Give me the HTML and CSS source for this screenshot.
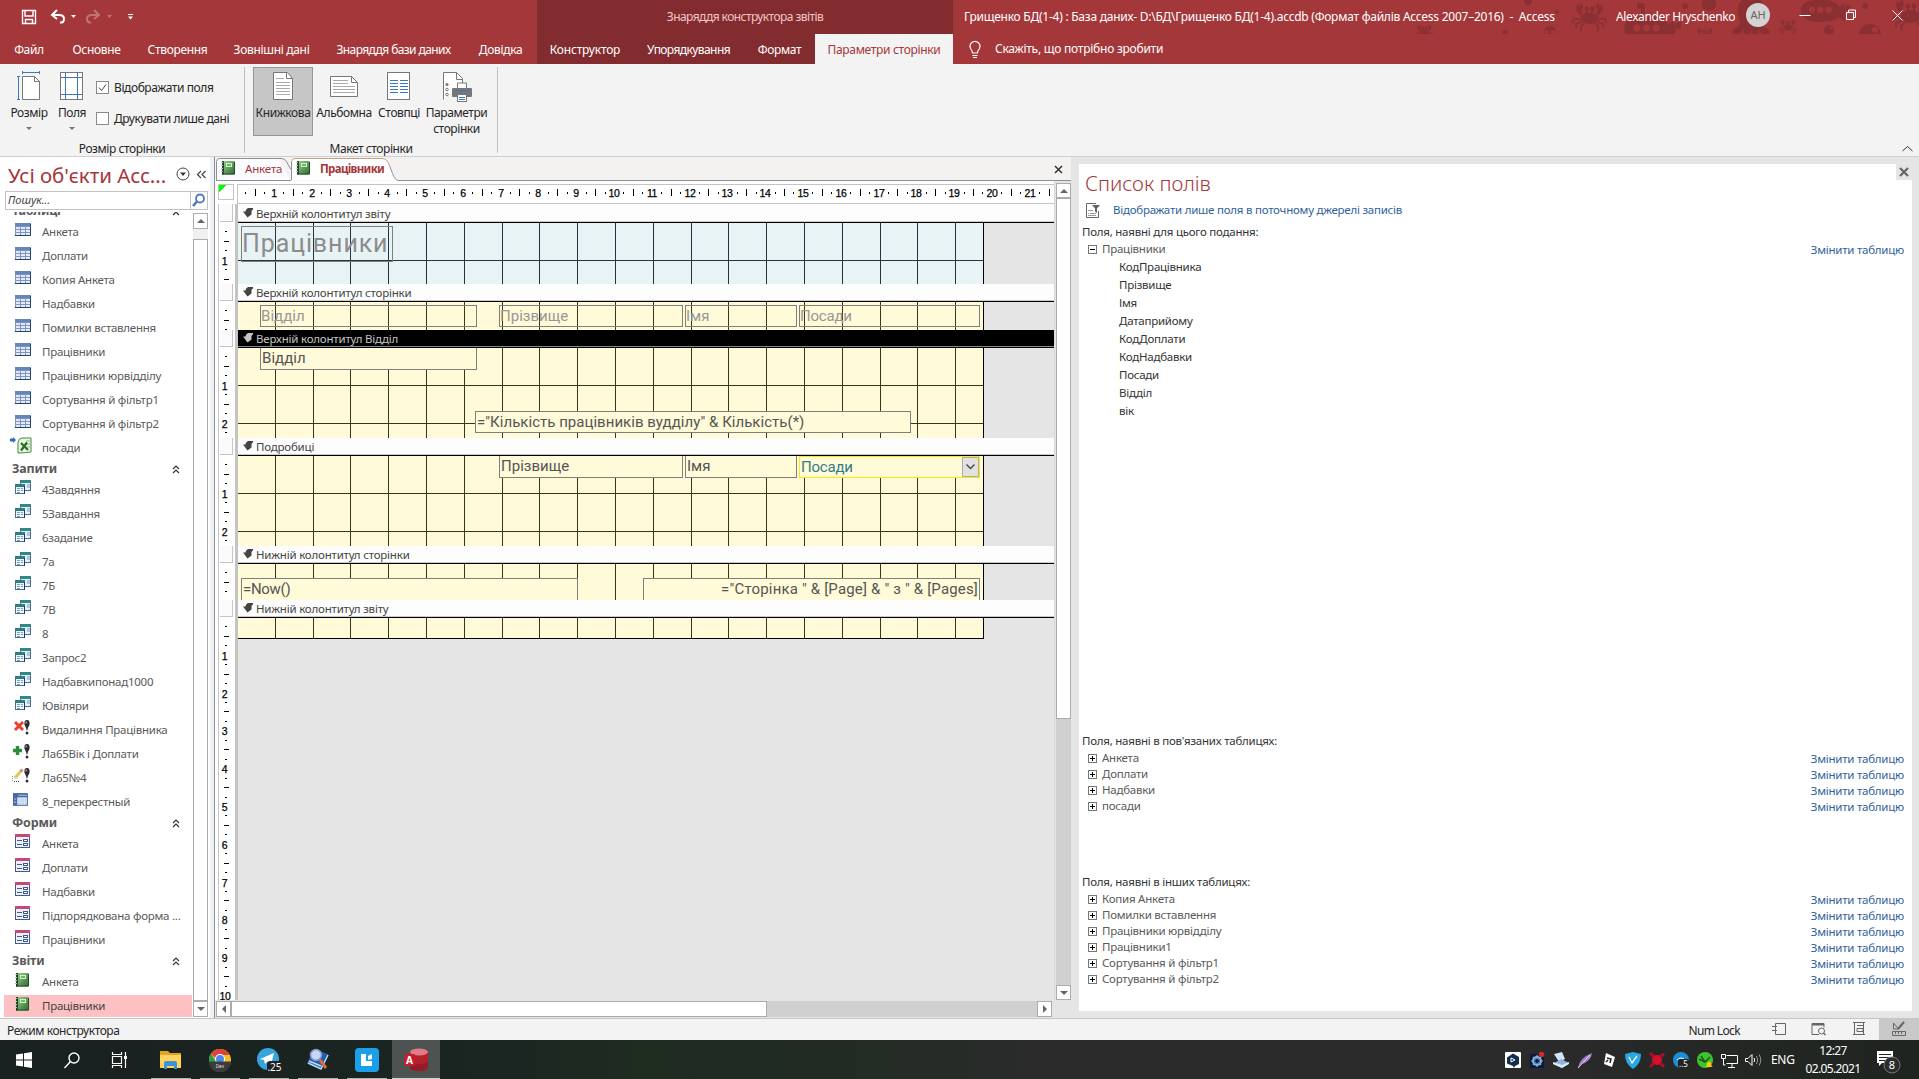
FILE: index.html
```html
<!DOCTYPE html>
<html lang="uk">
<head>
<meta charset="utf-8">
<title>Грищенко БД(1-4) - Access</title>
<link rel="stylesheet" href="styles.css">
</head>
<body>
<svg class="defs" width="0" height="0">
  <defs>
    <linearGradient id="gGreen" x1="0" y1="0" x2="1" y2="1"><stop offset="0" stop-color="#9bd48c"/><stop offset="1" stop-color="#2c6b31"/></linearGradient>
  </defs>
  <symbol id="i-table" viewBox="0 0 17 14"><rect width="16" height="13" fill="#7d95c2"/><rect width="16" height="3" fill="#6685bd"/><path d="M1 4h4v2H1zM6 4h4v2H6zM11 4h4v2h-4zM1 7h4v2H1zM6 7h4v2H6zM11 7h4v2h-4zM1 10h4v2H1zM6 10h4v2H6zM11 10h4v2h-4z" fill="#e3ebf8"/><path d="M0 12.500h15.500V1" stroke="#2c426e" fill="none"/></symbol>
  <symbol id="i-query" viewBox="0 0 17 15"><rect x="5.500" y=".5" width="10" height="10" fill="#e6effa" stroke="#48718f"/><rect x="5" width="11" height="3" fill="#2c8a87"/><path d="M12 5h3M12 7h3" stroke="#7f9ec4"/><rect x=".5" y="4.500" width="9" height="9" fill="#eef4fc" stroke="#48718f"/><rect y="4" width="10" height="3" fill="#2f7d83"/><path d="M2 8.500h3M6 8.500h2M2 10.500h3M6 10.500h2M2 12.500h3" stroke="#7f9ec4"/><path d="M9.500 6v8" stroke="#213a5e"/></symbol>
  <symbol id="i-form" viewBox="0 0 16 15"><rect x=".5" y=".5" width="14" height="13" fill="#edf1fa" stroke="#43598a"/><rect width="15" height="3" fill="#c74779"/><path d="M2 6.500h5M2 10.500h5" stroke="#43598a"/><rect x="8.500" y="5.500" width="4" height="2" fill="#fff" stroke="#43598a"/><rect x="8.500" y="9.500" width="4" height="2" fill="#fff" stroke="#43598a"/></symbol>
  <symbol id="i-report" viewBox="0 0 14 14"><rect x="1" width="12.500" height="13.500" fill="url(#gGreen)"/><rect x="1" width="2" height="13.500" fill="#26422a"/><path d="M0 1.500h2M0 4.500h2M0 7.500h2M0 10.500h2" stroke="#bcc7bc"/><rect x="5.500" y="2.500" width="5" height="3" fill="#72b56d" stroke="#d5efcf"/><path d="M1 13h12.500V1" stroke="#1e4c28" fill="none"/></symbol>
  <symbol id="i-excel" viewBox="0 0 22 17"><path d="M0 1.500h3V0l3 3-3 3V4.500H0z" fill="#3568c4"/><path d="M8 5q1-4 4-4h9v14q-7 1-13 1z" fill="#eaf6e6" stroke="#418a3a"/><path d="M16 4h4M17 7h3M17 10h3" stroke="#8cc183"/><path d="M11 6l7 7M17 5.500l-6 8" stroke="#276e27" stroke-width="2.200"/></symbol>
  <symbol id="i-bang" viewBox="0 0 8 16"><ellipse cx="4" cy="3.500" rx="2.600" ry="3.400" fill="#2c2c2c"/><path d="M2 5l2 6 2-6z" fill="#2c2c2c"/><circle cx="3.200" cy="2.400" r="1" fill="#999"/><circle cx="4" cy="13" r="1.500" fill="#333"/></symbol>
  <symbol id="i-del" viewBox="0 0 20 16"><path d="M3 2l8 8M11 2l-8 8" stroke="#e8402f" stroke-width="3"/><use href="#i-bang" x="11" width="8" height="16"/></symbol>
  <symbol id="i-add" viewBox="0 0 20 16"><path d="M5.500 2v9M1 6.500h9" stroke="#2e8a3c" stroke-width="3.400"/><use href="#i-bang" x="11" width="8" height="16"/></symbol>
  <symbol id="i-upd" viewBox="0 0 20 16"><path d="M3 10l6-7" stroke="#e4c65c" stroke-width="3"/><path d="M8.500 3.500l2-2" stroke="#d08a86" stroke-width="3"/><path d="M0 8v5M2 13.500h5" stroke="#333" stroke-dasharray="1 1"/><use href="#i-bang" x="11" width="8" height="16"/></symbol>
  <symbol id="i-cross" viewBox="0 0 16 13"><rect width="14" height="12" fill="#4467a8"/><rect x="4" y="4" width="9" height="7" fill="#eaf0fa"/><path d="M5 5.500h8M5 7.500h8M5 9.500h8" stroke="#7f9cc8" stroke-dasharray="1 1"/><path d="M1 5.500h2M1 8.500h2M5 2h8" stroke="#a9c0e6"/></symbol>
  <symbol id="i-up2" viewBox="0 0 8 9"><path d="M1 4l3-3 3 3M1 8l3-3 3 3" stroke="#333" stroke-width="1.200" fill="none"/></symbol>
  <symbol id="i-plus" viewBox="0 0 9 9"><rect x=".5" y=".5" width="8" height="8" fill="#fff" stroke="#777"/><path d="M2 4.500h5M4.500 2v5" stroke="#000"/></symbol>
  <symbol id="i-minus" viewBox="0 0 9 9"><rect x=".5" y=".5" width="8" height="8" fill="#fff" stroke="#777"/><path d="M2 4.500h5" stroke="#000"/></symbol>
  <symbol id="i-sec" viewBox="0 0 10 10"><path d="M10 0H5Q2.500 1 2.500 3.500H0L4.500 9.500 8.500 6.500V3.500Q8.500 2 10 1.500z" fill="currentColor"/></symbol>
  <symbol id="cols" viewBox="0 0 746 100"><path d="M37.500 0v100M75.500 0v100M112.500 0v100M150.500 0v100M188.500 0v100M226.500 0v100M264.500 0v100M301.500 0v100M339.500 0v100M377.500 0v100M415.500 0v100M453.500 0v100M490.500 0v100M528.500 0v100M566.500 0v100M604.500 0v100M642.500 0v100M679.500 0v100M717.500 0v100" stroke="currentColor"/><path d="M745.500 0v100" stroke="#000"/></symbol>
  <symbol id="crab" viewBox="0 0 40 40"><path d="M10 20q10-8 20 0-2 9-10 9t-10-9zM12 20Q3 16 6 6l3 4 1-5q5 5 1 9zM28 20q9-4 6-14l-3 4-1-5q-5 5-1 9z"/><path d="M11 24l-8-1-2 5M12 26l-7 3v5M14 28l-4 4 1 5M29 24l8-1 2 5M28 26l7 3v5M26 28l4 4-1 5M17 18v-5M23 18v-5" fill="none" stroke="#8a3033" stroke-width="2"/><circle cx="17" cy="12" r="2.500"/><circle cx="23" cy="12" r="2.500"/></symbol>
  <symbol id="octo" viewBox="0 0 40 48"><path d="M20 2c14 0 15 14 10 24 1 6 8 4 8 10s-5 6-5 2c-3-2-5-4-6-6 0 5 1 14-3 14s-1-8-4-12c-3 4 0 12-4 12s-3-9-3-14c-1 2-3 4-6 6 0 4-5 4-5-2s7-4 8-10C5 16 6 2 20 2z"/></symbol>
  <symbol id="sub" viewBox="0 0 56 40"><path d="M18 14V6h-4V1h7v12zM2 25Q2 13 24 13q14 0 20 8l4-4 2 8-1 12-6-5q-6 5-19 5Q2 37 2 25zM50 19h5v6h-5z"/><g fill="#a4373a"><circle cx="14" cy="24" r="3.400"/><circle cx="23" cy="24" r="3.400"/><circle cx="32" cy="24" r="3.400"/></g></symbol>
</svg>

<header class="titlebar">
  <svg class="pattern" width="519" height="50" viewBox="1400 0 519 50" fill="#8a3033">
    <use href="#crab" x="1412" y="22" width="25" height="19"/><use href="#crab" x="1568" y="-2" width="43" height="36"/><use href="#crab" x="1692" y="25" width="26" height="20"/><use href="#crab" x="1776" y="17" width="24" height="19"/><use href="#crab" x="1887" y="-6" width="48" height="40"/>
    <use href="#octo" x="1540" y="25" width="20" height="21"/><use href="#octo" x="1730" y="-5" width="42" height="51"/>
    <use href="#sub" x="1622" y="2" width="60" height="43"/><use href="#sub" x="1799" y="-14" width="52" height="40"/>
    <circle cx="1505" cy="33" r="3"/><circle cx="1528" cy="1" r="4"/><circle cx="1685" cy="6" r="3"/><circle cx="1709" cy="4" r="7"/><circle cx="1829" cy="30" r="5"/><circle cx="1870" cy="35" r="11"/><circle cx="1865" cy="6" r="3"/><circle cx="1557" cy="12" r="2"/>
    <circle cx="1875" cy="30" r="3" fill="#a4373a"/><circle cx="1831" cy="28" r="1.500" fill="#a4373a"/><circle cx="1547" cy="32" r="2" fill="#a4373a"/><circle cx="1553" cy="32" r="2" fill="#a4373a"/>
  </svg>
  <div class="qat">
    <svg width="150" height="34" fill="none" stroke="#fff"><path d="M22.500 10.500h13v13h-13zM25 10.500v5.500h8v-5.500M25.500 23.500v-4h7v4" stroke-width="1.400"/><path d="M57 10l-5 5 5 4M52.500 15h6.500q5 0 5 4t-4 3.500" stroke-width="2"/><path d="M71 15h5l-2.500 3z" fill="#fff" stroke="none"/><g opacity=".3"><path d="M94 10l5 5-5 4M99 15h-7q-5 0-5 4t4 3.500" stroke-width="2"/><path d="M107 15h5l-2.500 3z" fill="#fff" stroke="none"/></g><path d="M128 14.500h5"/><path d="M128 16.500h5l-2.500 3z" fill="#fff" stroke="none"/></svg>
  </div>
  <div class="context-title">Знаряддя конструктора звітів</div>
  <div class="doc-title">Грищенко БД(1-4) : База даних- D:\БД\Грищенко БД(1-4).accdb (Формат файлів Access 2007–2016) &nbsp;-&nbsp; Access</div>
  <div class="user">Alexander Hryschenko</div>
  <div class="avatar">AH</div>
  <svg class="winbtns" width="139" height="34" fill="none" stroke="#fff"><path d="M19.500 15.500h11M66.500 12.500h7v7h-7zM68.500 12v-2h7v7.500h-2M112.500 10.500l10 10M122.500 10.500l-10 10"/></svg>
</header>
<nav class="tabs">
  <span>Файл</span><span>Основне</span><span>Створення</span><span>Зовнішні дані</span><span class="tight">Знаряддя бази даних</span><span>Довідка</span><span class="ctx loose">Конструктор</span><span class="ctx tight">Упорядкування</span><span class="ctx">Формат</span><span class="active">Параметри сторінки</span>
  <span class="tell"><svg width="14" height="20" fill="none" stroke="#fff" stroke-width="1.200"><path d="M4.500 13q0-2-2-4.500a5 5 0 1 1 9 0q-2 2.500-2 4.500zM4.500 15.500h5M5 17.500h4"/></svg>Скажіть, що потрібно зробити</span>
</nav>

<section class="ribbon">
  <div class="group size-group">
    <div class="group-body">
      <div class="big w-size"><svg width="26" height="32" fill="none"><path d="M6.500 5.500h12l5 5v18h-17z" fill="#fff" stroke="#777"/><path d="M18.500 5.500v5h5" stroke="#777"/><path d="M6 1.500h18M6.500 0v3M23.500 0v3M2.500 6v23M1 5.500h3M1 28.500h3" stroke="#3b78bd"/></svg><span>Розмір</span><i class="caret"></i></div>
      <div class="big w-fields"><svg width="26" height="32" fill="none"><rect x="1.500" y="1.500" width="22" height="27" fill="#fff" stroke="#777"/><path d="M6.500 2v26M18.500 2v26M2 6.500h21M2 23.500h21" stroke="#3b78bd"/></svg><span>Поля</span><i class="caret"></i></div>
      <div class="checks">
        <label><svg width="13" height="13" fill="none"><rect x=".5" y=".5" width="12" height="12" fill="#fff" stroke="#8a8a8a"/><path d="M3 6.500l2.500 3 4.500-6" stroke="#444"/></svg>Відображати поля</label>
        <label><svg width="13" height="13" fill="none"><rect x=".5" y=".5" width="12" height="12" fill="#fff" stroke="#8a8a8a"/></svg>Друкувати лише дані</label>
      </div>
    </div>
    <div class="group-name">Розмір сторінки</div>
  </div>
  <div class="group layout-group">
    <div class="group-body">
      <div class="big w-port pressed"><svg width="26" height="32" fill="none"><path d="M3.500 1.500h14l5 6v21h-19z" fill="#fff" stroke="#777"/><path d="M16.500 1.500v6h6" stroke="#777"/><path d="M6 7.500h8M6 11.500h14M6 14.500h14M6 17.500h14M6 20.500h14M6 23.500h14" stroke="#aaa"/></svg><span>Книжкова</span></div>
      <div class="big w-land"><svg width="30" height="32" fill="none"><path d="M1.500 5.500h21l6 6v14h-27z" fill="#fff" stroke="#777"/><path d="M22.500 5.500v6h6" stroke="#777"/><path d="M4 9.500h15M4 12.500h15M4 15.500h22M4 18.500h22M4 21.500h22" stroke="#aaa"/></svg><span>Альбомна</span></div>
      <div class="big w-cols"><svg width="26" height="32" fill="none"><rect x="1.500" y="1.500" width="22" height="27" fill="#fff" stroke="#777"/><path d="M4 9.500h8M14 9.500h8M4 12.500h8M14 12.500h8M4 15.500h8M14 15.500h8M4 18.500h8M14 18.500h8M4 21.500h8M14 21.500h8" stroke="#3b78bd"/></svg><span>Стовпці</span></div>
      <div class="big w-setup"><svg width="32" height="32" fill="none"><path d="M2.500 28.500v-27h13l6 6v5" fill="#fff" stroke="#777"/><path d="M15.500 1.500v7h6" stroke="#777"/><circle cx="6" cy="13.500" r="1.500" fill="#777"/><circle cx="6" cy="18.500" r="1.300" stroke="#777"/><circle cx="6" cy="23.500" r="1.300" stroke="#777"/><rect x="11" y="17" width="20" height="9" rx="1" fill="#777"/><path d="M16.500 17v-5h9v5" fill="#fff" stroke="#777"/><path d="M14 19.500h14V17" stroke="#3b78bd"/><rect x="16.500" y="23.500" width="9" height="7" fill="#fff" stroke="#777"/><path d="M18 26.500h6M18 28.500h6" stroke="#3b78bd"/></svg><span>Параметри<br>сторінки</span></div>
    </div>
    <div class="group-name">Макет сторінки</div>
  </div>
  <svg class="collapse" width="12" height="8" fill="none" stroke="#333"><path d="M1.500 6l5-4.500 5 4.500"/></svg>
</section>

<main class="work">
  <aside class="nav">
    <div class="nav-title"><span>Усі об'єкти Acc...</span><svg width="34" height="16" fill="none" stroke="#444"><circle cx="8" cy="7" r="6"/><path d="M5 5.500h6l-3 3.500z" fill="#333" stroke="none"/><path d="M26 4l-3.500 3.500L26 11M30.500 4L27 7.500l3.500 3.500" stroke-width="1.200"/></svg></div>
    <div class="search"><span>Пошук...</span><svg width="17" height="17" fill="none"><circle cx="9" cy="6.500" r="4" stroke="#4a7ab8" stroke-width="1.800"/><path d="M6 9.500L2 14" stroke="#4a7ab8" stroke-width="2.600"/></svg></div>
    <div class="nav-body">
      <div class="tree">
        <h3 class="first">Таблиці<svg width="8" height="9"><use href="#i-up2"/></svg></h3>
        <p><svg width="17" height="14"><use href="#i-table"/></svg>Анкета</p>
        <p><svg width="17" height="14"><use href="#i-table"/></svg>Доплати</p>
        <p><svg width="17" height="14"><use href="#i-table"/></svg>Копия Анкета</p>
        <p><svg width="17" height="14"><use href="#i-table"/></svg>Надбавки</p>
        <p><svg width="17" height="14"><use href="#i-table"/></svg>Помилки вставлення</p>
        <p><svg width="17" height="14"><use href="#i-table"/></svg>Працівники</p>
        <p><svg width="17" height="14"><use href="#i-table"/></svg>Працівники юрвідділу</p>
        <p><svg width="17" height="14"><use href="#i-table"/></svg>Сортування й фільтр1</p>
        <p><svg width="17" height="14"><use href="#i-table"/></svg>Сортування й фільтр2</p>
        <p class="wide"><svg width="22" height="17"><use href="#i-excel"/></svg>посади</p>
        <h3>Запити<svg width="8" height="9"><use href="#i-up2"/></svg></h3>
        <p><svg width="17" height="15"><use href="#i-query"/></svg>4Завдяння</p>
        <p><svg width="17" height="15"><use href="#i-query"/></svg>5Завдання</p>
        <p><svg width="17" height="15"><use href="#i-query"/></svg>6задание</p>
        <p><svg width="17" height="15"><use href="#i-query"/></svg>7а</p>
        <p><svg width="17" height="15"><use href="#i-query"/></svg>7Б</p>
        <p><svg width="17" height="15"><use href="#i-query"/></svg>7В</p>
        <p><svg width="17" height="15"><use href="#i-query"/></svg>8</p>
        <p><svg width="17" height="15"><use href="#i-query"/></svg>Запрос2</p>
        <p><svg width="17" height="15"><use href="#i-query"/></svg>Надбавкипонад1000</p>
        <p><svg width="17" height="15"><use href="#i-query"/></svg>Ювіляри</p>
        <p class="act"><svg width="20" height="16"><use href="#i-del"/></svg>Видалиння Працівника</p>
        <p class="act"><svg width="20" height="16"><use href="#i-add"/></svg>Ла65Вік і Доплати</p>
        <p class="act"><svg width="20" height="16"><use href="#i-upd"/></svg>Ла65№4</p>
        <p class="act"><svg width="20" height="14" viewBox="0 0 20 14"><use href="#i-cross" x="1" width="17" height="14"/></svg>8_перекрестный</p>
        <h3>Форми<svg width="8" height="9"><use href="#i-up2"/></svg></h3>
        <p><svg width="16" height="15"><use href="#i-form"/></svg>Анкета</p>
        <p><svg width="16" height="15"><use href="#i-form"/></svg>Доплати</p>
        <p><svg width="16" height="15"><use href="#i-form"/></svg>Надбавки</p>
        <p><svg width="16" height="15"><use href="#i-form"/></svg>Підпорядкована форма ...</p>
        <p><svg width="16" height="15"><use href="#i-form"/></svg>Працівники</p>
        <h3>Звіти<svg width="8" height="9"><use href="#i-up2"/></svg></h3>
        <p><svg width="14" height="14"><use href="#i-report"/></svg>Анкета</p>
        <p class="selected"><svg width="14" height="14"><use href="#i-report"/></svg>Працівники</p>
      </div>
      <div class="vscroll nav-scroll"><b class="btn"><i class="up"></i></b><b class="gap"></b><b class="thumb"></b><b class="btn"><i class="down"></i></b></div>
    </div>
  </aside>
  <div class="splitter"></div>

  <section class="doc">
    <div class="doc-tabs">
      <svg class="tab-shapes" width="856" height="24" fill="none"><path d="M0 23.500h1.500V4q0-3 3-3H59q5 0 8 6l9 17z" fill="#fafcff" stroke="none"/><path d="M1.500 23V4.500q0-3 3-3H66q5 0 7 6l3 5" stroke="#8b9097"/><path d="M76 23.500V5q0-3.500 3.500-3.500H167q5 0 7.500 7l3 8q2.500 7 6 7z" fill="#fff"/><path d="M76.500 23V5q0-3.500 3.500-3.500H167q5 0 7.500 7" stroke="#c2a083"/><path d="M1 23.500h75M76.500 23V5M174.500 8.500l3 8q2.500 7 6 7H856" stroke="#8b9097"/></svg>
      <div class="tab t1"><svg width="14" height="14"><use href="#i-report"/></svg>Анкета</div>
      <div class="tab t2"><svg width="14" height="14"><use href="#i-report"/></svg>Працівники</div>
      <svg class="doc-close" width="9" height="9" stroke="#333" stroke-width="1.500"><path d="M1 1l7 7M8 1L1 8"/></svg>
    </div>
    <div class="doc-main">
      <div class="designer">
        <div class="top-ruler"><div class="corner"></div><div class="hr"><svg class="ruler-h" width="815" height="18"></svg></div></div>
        <div class="sections">
          <div class="sec r0"><div class="vr"><b></b><svg class="ruler-v" data-ticks="6" height="61"></svg></div><div class="main"><div class="bar"><svg width="10" height="10"><use href="#i-sec"/></svg>Верхній колонтитул звіту</div><div class="canvas blue"><svg width="746" height="61" viewBox="0 0 746 61"><use href="#cols" width="746" height="100"/><path d="M0 37.500h745" stroke="currentColor"/></svg><div class="ctl title">Працівники</div></div></div></div>
          <div class="sec r1"><div class="vr"><b></b><svg class="ruler-v" data-ticks="3" height="29"></svg></div><div class="main"><div class="bar"><svg width="10" height="10"><use href="#i-sec"/></svg>Верхній колонтитул сторінки</div><div class="canvas"><svg width="746" height="28"><use href="#cols" width="746" height="100"/></svg><div class="ctl lbl c-dept">Відділ</div><div class="ctl lbl c-sur">Прізвище</div><div class="ctl lbl c-name">Імя</div><div class="ctl lbl c-pos">Посади</div></div></div></div>
          <div class="sec r2"><div class="vr"><b></b><svg class="ruler-v" data-ticks="9" height="91"></svg></div><div class="main"><div class="bar dark"><svg width="10" height="10"><use href="#i-sec"/></svg>Верхній колонтитул Відділ</div><div class="canvas"><svg width="746" height="90"><use href="#cols" width="746" height="100"/><path d="M0 37.500h745M0 75.500h745" stroke="currentColor"/></svg><div class="ctl c-dept2">Відділ</div><div class="ctl c-count">="Кількість працівників вудділу" &amp; Кількість(*)</div></div></div></div>
          <div class="sec r3"><div class="vr"><b></b><svg class="ruler-v" data-ticks="9" height="91"></svg></div><div class="main"><div class="bar"><svg width="10" height="10"><use href="#i-sec"/></svg>Подробиці</div><div class="canvas"><svg width="746" height="90"><use href="#cols" width="746" height="100"/><path d="M0 37.500h745M0 75.500h745" stroke="currentColor"/></svg><div class="ctl d c-sur">Прізвище</div><div class="ctl d c-name">Імя</div><div class="ctl d c-pos picked">Посади<span class="drop"><svg width="9" height="6" fill="none" stroke="#444" stroke-width="1.300"><path d="M.5.5l4 4 4-4"/></svg></span></div></div></div></div>
          <div class="sec r4"><div class="vr"><b></b><svg class="ruler-v" data-ticks="3" height="37"></svg></div><div class="main"><div class="bar"><svg width="10" height="10"><use href="#i-sec"/></svg>Нижній колонтитул сторінки</div><div class="canvas"><svg width="746" height="36"><use href="#cols" width="746" height="100"/></svg><div class="ctl c-now">=Now()</div><div class="ctl c-page">="Сторінка " &amp; [Page] &amp; " з " &amp; [Pages]</div></div></div></div>
          <div class="sec r5"><div class="vr"><b></b><svg class="ruler-v" data-ticks="40" height="383"></svg></div><div class="main"><div class="bar"><svg width="10" height="10"><use href="#i-sec"/></svg>Нижній колонтитул звіту</div><div class="canvas"><svg width="746" height="20"><use href="#cols" width="746" height="100"/></svg></div></div></div>
        </div>
      </div>
      <div class="vscroll doc-scroll"><b class="btn"><i class="up"></i></b><b class="thumb"></b><b class="track"></b><b class="btn"><i class="down"></i></b></div>
    </div>
    <div class="hscroll"><b class="btn"><i class="left"></i></b><b class="thumb"></b><b class="track"></b><b class="btn"><i class="right"></i></b></div>
  </section>

  <aside class="fields">
    <div class="fields-in">
      <svg class="panel-close" width="16" height="16"><rect width="16" height="16" fill="#e5e5e5"/><path d="M4 4l8 8M12 4l-8 8" stroke="#666" stroke-width="2.200"/></svg>
      <h2>Список полів</h2>
      <div class="only"><svg width="16" height="17" fill="none"><path d="M13.500 9v6.500h-12v-14H11" stroke="#666"/><path d="M7 3h8l-3 3.500V11l-2-1.500v-3z" fill="#666"/><path d="M3 8.500h5M3 11.500h1M5 11.500h6M3 13.500h8" stroke="#999"/></svg><a>Відображати лише поля в поточному джерелі записів</a></div>
      <div class="cap">Поля, наявні для цього подання:</div>
      <div class="row r-first"><svg width="9" height="9"><use href="#i-minus"/></svg><span>Працівники</span><a>Змінити таблицю</a></div>
      <ul class="flist"><li>КодПрацівника</li><li>Прізвище</li><li>Імя</li><li>Датаприйому</li><li>КодДоплати</li><li>КодНадбавки</li><li>Посади</li><li>Відділ</li><li>вік</li></ul>
      <div class="cap cap2">Поля, наявні в пов'язаних таблицях:</div>
      <div class="row"><svg width="9" height="9"><use href="#i-plus"/></svg><span>Анкета</span><a>Змінити таблицю</a></div>
      <div class="row"><svg width="9" height="9"><use href="#i-plus"/></svg><span>Доплати</span><a>Змінити таблицю</a></div>
      <div class="row"><svg width="9" height="9"><use href="#i-plus"/></svg><span>Надбавки</span><a>Змінити таблицю</a></div>
      <div class="row"><svg width="9" height="9"><use href="#i-plus"/></svg><span>посади</span><a>Змінити таблицю</a></div>
      <div class="cap cap3">Поля, наявні в інших таблицях:</div>
      <div class="row"><svg width="9" height="9"><use href="#i-plus"/></svg><span>Копия Анкета</span><a>Змінити таблицю</a></div>
      <div class="row"><svg width="9" height="9"><use href="#i-plus"/></svg><span>Помилки вставлення</span><a>Змінити таблицю</a></div>
      <div class="row"><svg width="9" height="9"><use href="#i-plus"/></svg><span>Працівники юрвідділу</span><a>Змінити таблицю</a></div>
      <div class="row"><svg width="9" height="9"><use href="#i-plus"/></svg><span>Працівники1</span><a>Змінити таблицю</a></div>
      <div class="row"><svg width="9" height="9"><use href="#i-plus"/></svg><span>Сортування й фільтр1</span><a>Змінити таблицю</a></div>
      <div class="row"><svg width="9" height="9"><use href="#i-plus"/></svg><span>Сортування й фільтр2</span><a>Змінити таблицю</a></div>
    </div>
  </aside>
</main>

<footer class="status">
  <span class="mode">Режим конструктора</span><span class="num">Num Lock</span>
  <svg width="40" height="22" fill="none" stroke="#666"><path d="M16.500 4.500h10v11h-10zM13 7.500h5M13 11.500h5" /></svg>
  <svg width="40" height="22" fill="none" stroke="#666"><path d="M20 15.500h-7v-11h12v4"/><path d="M13 5.500h12" stroke-width="2"/><circle cx="22.500" cy="12" r="3"/><path d="M24.500 14l2 2" stroke-width="1.400"/></svg>
  <svg width="40" height="22" fill="none" stroke="#666"><path d="M14 3.500h12M14 15.500h12M15.500 3v13M24.500 3v13M18 6.500h6M18 9.500h6v3h-6z"/></svg>
  <svg class="on" width="40" height="22" fill="none" stroke="#666"><path d="M14.500 4v6h5zM13.500 12.500h13v4h-13zM16.500 13v2M19.500 13v2M22.500 13v2"/><path d="M19 10l6-7" stroke-width="2"/></svg>
</footer>

<footer class="taskbar">
  <div class="tcell"><svg width="18" height="18" viewBox="0 0 18 18" fill="#fff"><path d="M1 3.500l7-1V8.500H1zM9 2.300L17 1v7.500H9zM1 9.500h7V15.500l-7-1zM9 9.500h8V17l-8-1.200z"/></svg></div>
  <div class="tcell"><svg width="18" height="18" fill="none" stroke="#fff" stroke-width="1.400"><circle cx="11" cy="7" r="5"/><path d="M7.500 10.500L1.500 17"/></svg></div>
  <div class="tcell"><svg width="18" height="18" fill="none" stroke="#fff" stroke-width="1.200"><path d="M1.500 1v2.500h9V1M1.500 5.500h9v7h-9zM1.500 17v-2.500h9V17M14.500 1v16"/><path d="M13 5h3v3h-3z" fill="#fff" stroke="none"/></svg></div>
  <div class="tcell app"><svg width="24" height="20"><path d="M1 1h8l2 2h11v5H1z" fill="#e0a51c"/><rect x="1" y="5" width="21" height="13" fill="#ffd35c"/><path d="M5 19v-6q0-2 2-2h9q2 0 2 2v6h-3v-3H8v3z" fill="#3b93d9"/></svg></div>
  <div class="tcell app"><svg width="24" height="24"><circle cx="12" cy="12" r="11" fill="#f3c02b"/><path d="M12 1a11 11 0 0 1 10 6H12a5 5 0 0 0-4.500 3L3 5.500A11 11 0 0 1 12 1z" fill="#dc4437"/><path d="M3 5.500l5 8 2 3.500-2 5A11 11 0 0 1 3 5.500z" fill="#2d9b51"/><circle cx="12" cy="11" r="5" fill="#fff"/><circle cx="12" cy="11" r="4" fill="#4a8af4"/><path d="M1 13.500h22a11 11 0 0 1-22 0z" fill="#3c3c3c"/><text x="12" y="19.500" class="dev">Dev</text></svg></div>
  <div class="tcell app"><svg width="26" height="26"><circle cx="12" cy="12" r="11" fill="#35a5dc"/><path d="M4 12l14-6-3 12-4-3-2 2-1-4z" fill="#fff"/><rect x="11" y="14" width="15" height="11" rx="3" fill="#222"/><text x="18.500" y="23.500" class="badge-t">.25</text></svg></div>
  <div class="tcell app"><svg width="24" height="26"><path d="M8 2l14 5-7 15L1 16z" fill="#1e5faa"/><path d="M2 16l13 6 7-14M3 14l12 5" stroke="#b9dcf6" stroke-width="1.500" fill="none"/><circle cx="10" cy="8" r="5.500" fill="#c6d8f5" stroke="#8594c0" stroke-width="1.500"/><path d="M14 13l6 8" stroke="#dc6a40" stroke-width="3"/></svg></div>
  <div class="tcell app"><svg width="24" height="24"><rect width="24" height="24" rx="4" fill="#1aa0e8"/><path d="M6 6h5v7h6v5H6z" fill="#fff"/><path d="M13 8l4-2v5l-4 1z" fill="#fff"/></svg></div>
  <div class="tcell app active-app"><svg width="26" height="24"><path d="M7 4v15q0 4 9 4t9-4V4z" fill="#b3212f"/><path d="M7 12q0 4 9 4t9-4v7q0 4-9 4t-9-4z" fill="#921c2a"/><ellipse cx="16" cy="4" rx="9" ry="3.500" fill="#e37a86"/><rect x="1" y="6" width="11" height="12" rx="1" fill="#c3202f"/><text x="6.500" y="15.500" class="acc">A</text></svg></div>
  <div class="tray">
    <svg width="24" height="20"><rect x="4" y="2" width="16" height="16" rx="1" fill="#fff"/><path d="M12 3.500l6 3.500v7l-4 2-1 2-1-2-6-2.500v-6z" fill="#142d4c"/><path d="M10 8l4 2-4 2z" fill="none" stroke="#fff"/></svg>
    <svg width="24" height="20"><rect x="5" y="4" width="14" height="14" fill="#0c1a33"/><circle cx="12" cy="11" r="4" fill="none" stroke="#7ab4ea" stroke-width="2"/><path d="M12 5v12M6 11h12M8 7l8 8M16 7l-8 8" stroke="#7ab4ea" stroke-width="1.200"/><circle cx="12" cy="11" r="2" fill="#0c1a33"/><circle cx="16.500" cy="4.500" r="2.800" fill="#d8262c"/></svg>
    <svg width="24" height="20"><path d="M5 4l8-2 3 7-6 3z" fill="#cde4fa"/><path d="M4 14l8-5 8 4-7 5z" fill="#8fb4e0"/><path d="M4 14l9 4 7-4v-2l-7 3-9-3z" fill="#dce9f8"/></svg>
    <svg width="24" height="20"><path d="M5 18q1-10 14-15-1 9-11 11z" fill="#a77bc9"/><path d="M5 18L17 5" stroke="#ead8f4"/></svg>
    <svg width="24" height="20"><path d="M9 3l9 4-3 10-8-3z" fill="#fff"/><path d="M10 8l4 1-1 4M9 12l2-2" stroke="#222" fill="none" stroke-width="1.500"/></svg>
    <svg width="24" height="20"><path d="M4 4l8-2 8 2q0 10-8 15Q4 14 4 4z" fill="#26a8e0"/><path d="M8 7l3 6 5-7" stroke="#fff" fill="none" stroke-width="1.300"/></svg>
    <svg width="24" height="20"><circle cx="12" cy="10" r="5" fill="#d50f2d"/><path d="M5 3l4 4M19 4l-4 3M5 17l4-4M19 17l-4-4" stroke="#b30b26" stroke-width="3"/></svg>
    <svg width="24" height="20"><circle cx="12" cy="10" r="8" fill="#1b8fd6"/><path d="M8 10q4-4 8 0" stroke="#fff" fill="none"/><rect x="9" y="9" width="11" height="9" rx="2" fill="#222"/><text x="14.500" y="17" class="tiny">..5</text></svg>
    <svg width="24" height="20"><circle cx="12" cy="10" r="8" fill="#3fc431"/><path d="M6 9l6 3 5-5M8 6l4 6" stroke="#1a5a18" fill="none" stroke-width="1.500"/><path d="M12 17q2-1 2-4 2-3 4 0 0 3 2 4z" fill="#ffc60a"/></svg>
    <svg width="24" height="20" fill="none" stroke="#fff"><path d="M9.500 5.500h11v8h-11M15 14v3M11 17.500h7M4.500 4.500h4v4h-4zM6.500 9v6h2"/></svg>
    <svg width="24" height="20" fill="none" stroke="#fff"><path d="M4.500 8.500h2.500l4-4v11l-4-4H4.500zM13 8q1.500 2 0 4"/><path d="M15.500 6q2.500 4 0 8M18 4.500q3.500 5.500 0 11" opacity=".5"/></svg>
    <span class="lang">ENG</span>
    <span class="clock">12:27<br>02.05.2021</span>
    <svg class="note" width="34" height="30"><path d="M3 3h16v12H8l-3 3v-3H3z" fill="#fff"/><path d="M5 6.500h12M5 9.500h12M5 12.500h6" stroke="#222"/><circle cx="18" cy="17" r="8" fill="#2b2b2b" stroke="#777"/><text x="18" y="21" class="eight">8</text></svg>
  </div>
</footer>
<script src="rulers.js"></script>
</body>
</html>
```

FILE: styles.css
```css
* { box-sizing: border-box; }
html, body { height: 100%; }
body {
  margin: 0; width: 1919px; height: 1079px; overflow: hidden;
  display: flex; flex-direction: column;
  font: 12px/16px "Noto Sans", "Open Sans", sans-serif;
  color: #262626; background: #e5e5e5; white-space: nowrap;
}
svg { display: block; flex: none; }
.defs { position: absolute; }
h2, h3, p, ul { margin: 0; padding: 0; font-weight: 400; list-style: none; }

/* title bar */
.titlebar { position: relative; height: 34px; flex: none; background: #a4373a; color: #fff; display: grid; grid-template-columns: 537px 416px 663px 130px 34px 139px; font-size: 12px; line-height: 33px; }
.pattern { position: absolute; right: 0; top: 0; z-index: 0; }
.titlebar > div, .winbtns { position: relative; z-index: 1; }
.context-title { background: #822c2f; color: #f2c4c5; text-align: center; height: 34px; letter-spacing: -.57px; }
.doc-title { padding-left: 11px; letter-spacing: -.25px; }
.user { letter-spacing: -.38px; }
.avatar { width: 24px; height: 24px; margin: 3px 0 0 0; border-radius: 50%; background: #d3d3d3; color: #666; text-align: center; line-height: 24px; font-size: 11px; }
.tabs { position: relative; height: 30px; flex: none; background: #a4373a; color: #fff; display: grid; grid-template-columns: 58px 77px 85px 103px 141px 73px 96px 111px 71px 138px 300px; line-height: 32px; text-align: center; letter-spacing: -.32px; }
.tabs .tight { letter-spacing: -.58px; }
.tabs .loose { letter-spacing: -.2px; }
.ctx { background: #822c2f; }
.tabs .active { background: #f3f3f3; color: #a4373a; }
.tell { display: flex; gap: 13px; padding: 0 0 0 15px; line-height: 29px; letter-spacing: -.24px; }
.tell svg { margin-top: 6px; }

/* ribbon */
.ribbon { height: 93px; flex: none; background: #f3f3f3; border-bottom: 1px solid #d0d0d0; display: flex; position: relative; padding-top: 3px; letter-spacing: -.42px; }
.group { display: flex; flex-direction: column; border-right: 1px solid #c0c0c0; height: 86px; }
.size-group { width: 245px; }
.layout-group { width: 253px; }
.group-body { display: flex; height: 73px; }
.group-name { text-align: center; line-height: 16px; margin-top: 4px; }
.layout-group .group-body { padding-left: 8px; }
.big { display: flex; flex-direction: column; align-items: center; padding-top: 4px; text-align: center; height: 70px; }
.big span { margin-top: 2px; }
.w-size { width: 58px; } .w-fields { width: 28px; margin-right: 10px; }
.w-port { width: 60px; } .w-land { width: 62px; } .w-cols { width: 48px; } .w-setup { width: 67px; }
.pressed { background: #c6c6c6; border: 1px solid #969696; padding-top: 3px; height: 69px; }
.caret { border: 3px solid transparent; border-top-color: #777; margin-top: 6px; height: 0; }
.checks { padding-top: 13px; display: flex; flex-direction: column; gap: 15px; }
.checks label { display: flex; gap: 5px; align-items: center; }
.checks svg { margin-top: -1px; }
.collapse { position: absolute; right: 6px; bottom: 3px; }

/* workspace */
.work { flex: 1; display: flex; min-height: 0; }
.nav { width: 210px; background: #fff; display: flex; flex-direction: column; padding-left: 4px; color: #5a5a5a; }
.nav-title { height: 34px; display: flex; align-items: center; justify-content: space-between; color: #a4373a; font-size: 20.500px; line-height: 34px; padding: 2px 1px 0 4px; }
.nav-title span { letter-spacing: -.05px; }
.search { margin: 0 2px 0 1px; height: 19px; border: 1px solid #c2c2c2; display: flex; justify-content: space-between; color: #444; font-style: italic; font-size: 11px; line-height: 16px; padding-left: 2px; flex: none; }
.search svg { border-left: 1px solid #c2c2c2; }
.nav-body { flex: 1; display: flex; justify-content: space-between; padding-right: 1px; margin-top: 2px; min-height: 0; }
.tree { width: 188px; overflow: hidden; }
.tree h3 { height: 18px; display: flex; justify-content: space-between; align-items: center; font-weight: 700; font-size: 12.500px; letter-spacing: -.2px; padding: 0 12px 0 8px; }
.tree h3.first { margin-top: -10px; }
.tree p { height: 24px; display: flex; align-items: center; font-size: 11.500px; letter-spacing: -.25px; padding-left: 38px; }
.tree p svg { margin: -5px 10px 0 -27px; }
.tree p svg[width="16"] { margin-right: 11px; }
.tree p svg[width="14"] { margin-right: 13px; }
.tree p.wide svg { margin-left: -32px; }
.tree p.act svg { margin-left: -30px; }
.tree p.selected { height: 22px; margin-top: 1px; background: #fdc1c3; color: #444; }
.vscroll { width: 16px; display: flex; flex-direction: column; flex: none; }
.vscroll b, .hscroll b { display: block; flex: none; }
.btn { width: 15px; height: 16px; border: 1px solid #ababab; background: #fff; display: grid !important; place-items: center; }
.btn i { width: 0; height: 0; border: 4px solid transparent; }
.btn .up { border-bottom-color: #666; border-top-width: 0; }
.btn .down { border-top-color: #666; border-bottom-width: 0; }
.btn .left { border-right-color: #666; border-left-width: 0; }
.btn .right { border-left-color: #666; border-right-width: 0; }
.nav-scroll { padding-top: 1px; }
.gap { height: 10px; background: #f0f0f0; width: 15px; }
.nav-scroll .thumb { width: 15px; flex: 1; border: 1px solid #ababab; background: #fff; }
.nav-scroll .btn:last-child { margin-bottom: 1px; }
.splitter { width: 5px; background: #eff1f5; border-right: 1px solid #8b9097; }

/* document */
.doc { width: 856px; display: flex; flex-direction: column; background: #fff; }
.doc-tabs { position: relative; height: 24px; background: #f3f2f1; display: flex; color: #a4373a; flex: none; }
.tab-shapes { position: absolute; left: 0; top: 0; }
.tab { position: relative; display: flex; align-items: center; font-size: 11.500px; letter-spacing: -.15px; }
.tab svg { margin-top: -2px; }
.t1 { padding-left: 6px; width: 75px; gap: 10px; }
.t2 { padding-left: 6px; gap: 10px; font-weight: 700; letter-spacing: -.68px; }
.doc-close { position: absolute; right: 8px; top: 8px; }
.doc-main { flex: 1; display: flex; min-height: 0; }
.designer { width: 839px; display: flex; flex-direction: column; min-height: 0; }
.top-ruler { display: flex; height: 23px; flex: none; padding: 3px 0 0 3px; }
.corner { width: 16px; height: 16px; border: 1px solid #c4c4c4; background: linear-gradient(135deg, #0f0 0 5px, #fff 5.500px); }
.hr { margin-left: 3px; flex: 1; border-top: 1px solid #c4c4c4; border-bottom: 1px solid #c4c4c4; border-left: 1px solid #c4c4c4; height: 20px; }
.sections { flex: 1; display: flex; flex-direction: column; min-height: 0; background: #e5e5e5; }
.sec { display: flex; overflow: hidden; flex: none; }
.r0 { height: 80px; } .r1 { height: 46px; } .r2 { height: 108px; } .r3 { height: 108px; } .r4 { height: 54px; } .r5 { flex: 1 1 0; }
.vr { width: 23px; background: #fff; flex: none; position: relative; border-right: 2px solid #c4c4c4; padding-left: 4px; overflow: hidden; }
.vr::before { content: ""; position: absolute; left: 3px; top: 0; bottom: 0; width: 16px; border-left: 1px solid #c4c4c4; border-right: 1px solid #c4c4c4; }
.vr b { display: block; width: 13px; height: 17px; margin-left: 1px; background: #fafafa; border: solid #c4c4c4; border-width: 0 1px 1px 0; position: relative; }
.r0 .vr b { height: 18px; }
.main { flex: 1; }
.bar { height: 18px; background: #fdfdfd; border-bottom: 1px solid #000; box-shadow: inset 0 -1px #cbcbcb; display: flex; align-items: center; gap: 3px; padding: 1px 0 0 5px; font-size: 11.500px; letter-spacing: -.2px; line-height: 16px; color: #444; }
.bar svg { margin-top: -2px; }
.r0 .bar { height: 19px; }
.dark { background: #000; color: #c4c4c4; box-shadow: inset 0 -1px #888; }
.canvas { position: relative; width: 746px; background: #fffad8; color: #3a3619; overflow: hidden; }
.r5 .canvas { border-bottom: 1px solid #000; }
.canvas > svg { overflow: hidden; shape-rendering: crispEdges; }
.blue { background: #e8f3f5; color: #263338; }
.ctl { position: absolute; border: 1px solid #7f7f7f; height: 22px; background: #fffad8; color: #555; font: 15px/21px Roboto, sans-serif; letter-spacing: .03px; padding: 0 1px; overflow: hidden; }
.ctl.title { left: 3px; top: 3px; width: 152px; height: 36px; background: none; color: #8c8c8c; font-size: 25px; line-height: 33px; letter-spacing: .9px; padding: 0; }
.lbl { top: 3px; background: none; color: #979797; padding: 0; line-height: 20px; }
.d { top: 0; border-top-width: 0; }
.c-dept { left: 22px; width: 217px; } .c-sur { left: 261px; width: 184px; } .c-name { left: 447px; width: 112px; } .c-pos { left: 561px; width: 181px; letter-spacing: -.2px; }
.c-dept2 { left: 22px; width: 217px; top: 0; border-top-width: 0; }
.c-count { left: 237px; width: 436px; top: 63px; }
.picked { border: 1px solid #ffe619; color: #2f7d86; line-height: 20px; }
.drop { position: absolute; right: 0; top: 0; width: 17px; height: 20px; background: #e1e1e1; border: 1px solid #adadad; display: grid; place-items: center; }
.c-now { left: 3px; width: 337px; top: 14px; height: 30px; letter-spacing: -.3px; }
.c-page { left: 405px; width: 337px; top: 14px; height: 30px; text-align: right; letter-spacing: .17px; }
.num-h, .num-v { font: 10.500px "Liberation Sans", sans-serif; fill: #000; stroke: #000; stroke-width: .25px; text-anchor: middle; letter-spacing: -.4px; }
.ruler-v { position: relative; }
.doc-scroll { width: 17px; padding: 2px 0 0 1px; border-left: 1px solid #d8d8d8; background: #e5e5e5; }
.doc-scroll .btn { height: 15px; }
.doc-scroll .thumb { height: 521px; width: 15px; border: 1px solid #ababab; background: #fff; }
.doc-scroll .track { flex: 1; background: #d0d0d0; width: 15px; }
.hscroll { height: 18px; display: flex; padding: 1px 19px 1px 1px; background: #e5e5e5; flex: none; }
.hscroll .thumb { width: 536px; border: 1px solid #ababab; background: #fff; }
.hscroll .track { flex: 1; background: #d0d0d0; }

/* field list */
.fields { flex: 1; padding: 7px 7px 7px 8px; background: #e5e5e5; }
.fields-in { height: 847px; background: #fff; position: relative; padding: 4px 8px 0 3px; font-size: 11.500px; letter-spacing: -.24px; }
.panel-close { position: absolute; right: 0; top: 0; }
.fields h2 { color: #a4373a; font-size: 20.500px; line-height: 30px; padding-left: 3px; font-weight: 300; letter-spacing: 0; }
.only { display: flex; align-items: center; gap: 12px; padding-left: 3px; height: 20px; margin-top: 2px; margin-bottom: 4px; }
.fields a { color: #2f5f9e; }
.cap { height: 16px; line-height: 16px; color: #333; }
.row { display: flex; align-items: center; height: 16px; padding-left: 6px; color: #5a5a5a; }
.row span { margin-left: 5px; flex: 1; }
.row a { margin-bottom: -2px; }
.r-first { height: 18px; }
.flist { padding-left: 37px; color: #333; }
.flist li { height: 18px; line-height: 18px; }
.cap2 { margin-top: 313px; margin-bottom: 1px; }
.cap3 { margin-top: 60px; margin-bottom: 1px; }

/* status bar */
.status { height: 22px; flex: none; background: #f3f3f3; border-top: 1px solid #c6c6c6; display: flex; line-height: 23px; }
.mode { padding-left: 7px; flex: 1; letter-spacing: -.45px; }
.num { margin-right: 19px; letter-spacing: -.65px; }
.status .on { background: #c8c8c8; }

/* taskbar */
.taskbar { height: 39px; flex: none; background: linear-gradient(90deg, #18211f 0, #1b2522 500px, #1f2c20 640px, #222b24 860px, #2b2b2b 1050px, #2b2b2b 1500px, #1e241f 1919px); display: flex; color: #fff; }
.tcell { width: 48px; height: 39px; display: grid; place-items: center; flex: none; }
.app { width: 40px; margin-left: 9px; border-bottom: 1px solid #b5b5b5; padding-top: 1px; }
.tcell:nth-child(4) { margin-left: 7px; }
.active-app { width: 48px; margin-left: 5px; background: #4c5351; border-bottom-color: #d0d0d0; }
.dev { font: 5px Roboto, sans-serif; fill: #ddd; text-anchor: middle; }
.badge-t { font: 10px "Noto Sans", sans-serif; fill: #fff; text-anchor: middle; }
.acc { font: 700 10px "Noto Sans", sans-serif; fill: #fff; text-anchor: middle; }
.tiny { font: 8px "Noto Sans", sans-serif; fill: #fff; text-anchor: middle; }
.eight { font: 11px "Noto Sans", sans-serif; fill: #fff; text-anchor: middle; }
.tray { margin-left: auto; display: flex; align-items: center; height: 39px; width: 418px; }
.lang { margin-left: 6px; width: 24px; letter-spacing: -.3px; }
.clock { width: 76px; text-align: center; line-height: 18px; letter-spacing: -.65px; }
.note { margin-left: 3px; margin-top: 6px; }
```

FILE: rulers.js
```js
// Centimetre rulers: number on each whole unit, bar on the half, dot on the quarters.
const CM = 37.795;
const NS = "http://www.w3.org/2000/svg";

function add(svg, tag, attrs, text) {
  const el = document.createElementNS(NS, tag);
  for (const k in attrs) el.setAttribute(k, attrs[k]);
  if (text) el.textContent = text;
  svg.appendChild(el);
}

document.querySelectorAll(".ruler-h").forEach(svg => {
  for (let q = 1; q <= 86; q++) {
    const x = Math.round(q * CM / 4) - 2;
    if (q % 4 === 0) add(svg, "text", { x: x, y: 11.5, class: "num-h" }, String(q / 4));
    else if (q % 2 === 0) add(svg, "rect", { x: x, y: 4, width: 1, height: 7 });
    else add(svg, "rect", { x: x, y: 7, width: 1, height: 2 });
  }
});

document.querySelectorAll(".ruler-v").forEach(svg => {
  svg.setAttribute("width", 16);
  const ticks = Number(svg.dataset.ticks);
  for (let q = 1; q <= ticks; q++) {
    const y = Math.round(q * CM / 4);
    if (q % 4 === 0) add(svg, "text", { x: q === 40 ? 6 : 5.5, y: y + 5, class: "num-v" }, String(q / 4));
    else if (q % 2 === 0) add(svg, "rect", { x: 5, y: y, width: 5, height: 1 });
    else add(svg, "rect", { x: 6, y: y, width: 2, height: 1 });
  }
});
```
